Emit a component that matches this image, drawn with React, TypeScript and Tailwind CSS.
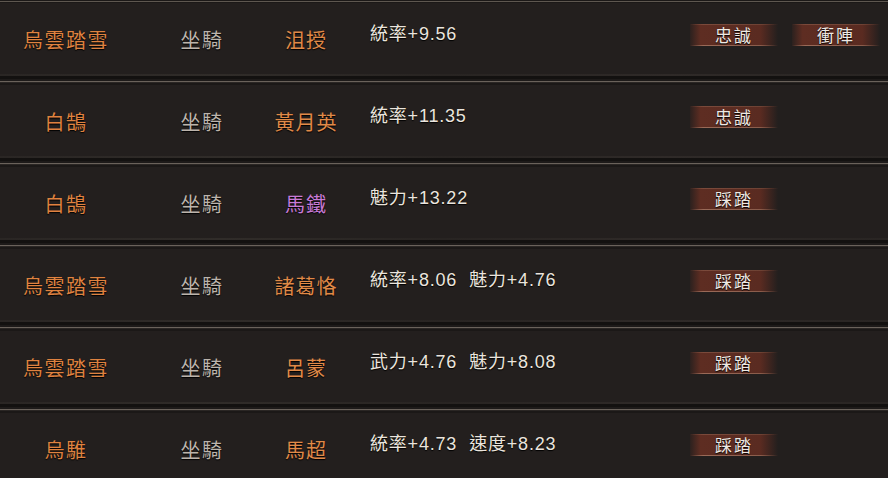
import React from "react";

type Row = {
  horse: string;
  person: string;
  personColor: "orange" | "purple";
  stats: string[];
  tags: string[];
};

const rows: Row[] = [
  { horse: "烏雲踏雪", person: "沮授", personColor: "orange", stats: ["統率+9.56"], tags: ["忠誠", "衝陣"] },
  { horse: "白鵠", person: "黃月英", personColor: "orange", stats: ["統率+11.35"], tags: ["忠誠"] },
  { horse: "白鵠", person: "馬鐵", personColor: "purple", stats: ["魅力+13.22"], tags: ["踩踏"] },
  { horse: "烏雲踏雪", person: "諸葛恪", personColor: "orange", stats: ["統率+8.06", "魅力+4.76"], tags: ["踩踏"] },
  { horse: "烏雲踏雪", person: "呂蒙", personColor: "orange", stats: ["武力+4.76", "魅力+8.08"], tags: ["踩踏"] },
  { horse: "烏騅", person: "馬超", personColor: "orange", stats: ["統率+4.73", "速度+8.23"], tags: ["踩踏"] },
];

function Separator() {
  return (
    <div className="flex flex-col">
      <div className="h-[2px] bg-[linear-gradient(to_right,#2a2624,#302c29,#282422,#2f2a28,#292523)]" />
      <div className="h-[3px] bg-[#131110]" />
      <div className="h-[2px] bg-[#1d1a19]" />
      <div className="h-[1px] bg-[#6a625b]" />
      <div className="h-[1px] bg-[#2a2624]" />
      <div className="h-[2px] bg-[#1b1817]" />
    </div>
  );
}

function Tag({ label }: { label: string }) {
  return (
    <div className="relative flex h-[22px] w-[88px] items-center justify-center bg-[linear-gradient(to_right,rgba(92,44,33,0.15),#5e2d22_12%,#5a2b21_80%,rgba(92,44,33,0))]">
      <div className="absolute inset-x-0 top-0 h-px bg-[linear-gradient(to_right,transparent,#7b4a3b_15%,#6e4234_80%,transparent)]" />
      <div className="absolute inset-x-0 bottom-0 h-px bg-[linear-gradient(to_right,transparent,#9a6a58_15%,#8a5c4b_80%,transparent)]" />
      <span className="text-[17px] leading-none tracking-[2px] text-[#eee9e4] [text-shadow:0_1px_1px_#000]">
        {label}
      </span>
    </div>
  );
}

export default function App() {
  return (
    <div className="h-[478px] w-[888px] overflow-hidden bg-[#231f1e] font-['Noto_Sans_CJK_TC',sans-serif]">
      <div className="flex flex-col">
        <div className="h-[1px] bg-[#1b1817]" />
        <div className="h-[1px] bg-[#5e5750]" />
        <div className="h-[1px] bg-[#1b1817]" />
      </div>
      {rows.map((row, i) => (
        <div key={i}>
          <div className="flex h-[71px] items-center pt-[2px]">
            <div className="w-[132px] text-center text-[20px] tracking-[1.5px] text-[#df8240] [text-shadow:0_1px_1px_#000]">
              {row.horse}
            </div>
            <div className="w-[140px] text-center text-[20px] tracking-[1.5px] text-[#bcb4ac] [text-shadow:0_1px_1px_#000]">
              坐騎
            </div>
            <div
              className={
                "w-[68px] text-center text-[20px] tracking-[1px] [text-shadow:0_1px_1px_#000] " +
                (row.personColor === "purple" ? "text-[#c77ad6]" : "text-[#e08a48]")
              }
            >
              {row.person}
            </div>
            <div className="flex w-[350px] gap-[12px] pb-[10px] pl-[30px] font-['Liberation_Sans','Noto_Sans_CJK_TC',sans-serif] text-[18px] tracking-[0.8px] text-[#ebe5de] [text-shadow:0_1px_1px_#000]">
              {row.stats.map((s) => (
                <span key={s}>{s}</span>
              ))}
            </div>
            <div className="flex gap-[14px] pb-[10px]">
              {row.tags.map((t) => (
                <Tag key={t} label={t} />
              ))}
            </div>
          </div>
          <Separator />
        </div>
      ))}
    </div>
  );
}
